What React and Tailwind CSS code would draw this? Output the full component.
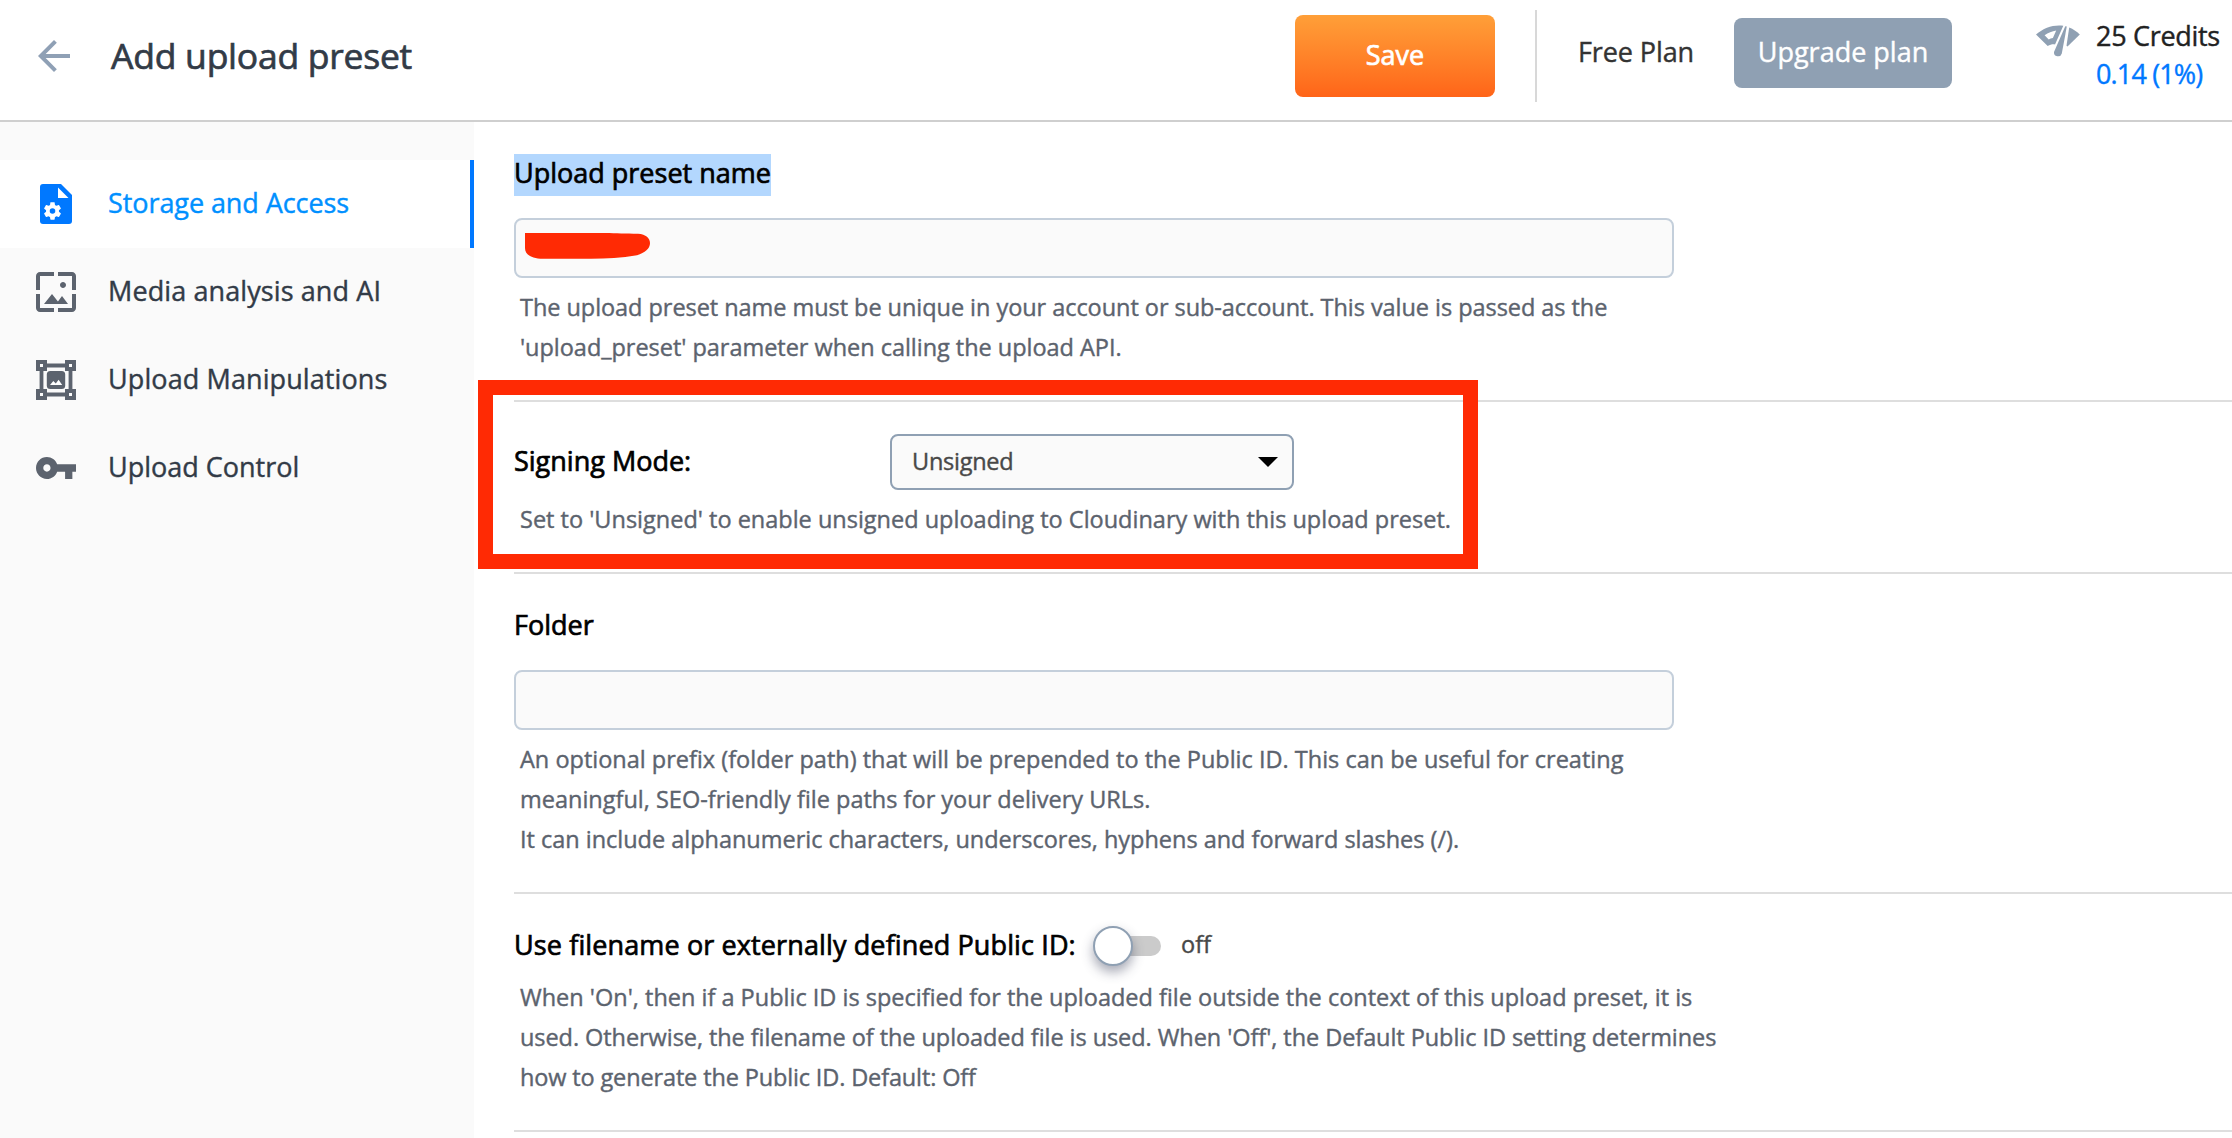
const GEAR =
  "M19.14 12.94c.04-.3.06-.61.06-.94 0-.32-.02-.64-.07-.94l2.03-1.58c.18-.14.23-.41.12-.61l-1.92-3.32c-.12-.22-.37-.29-.59-.22l-2.39.96c-.5-.38-1.03-.7-1.62-.94l-.36-2.54c-.04-.24-.24-.41-.48-.41h-3.84c-.24 0-.43.17-.47.41l-.36 2.54c-.59.24-1.13.57-1.62.94l-2.39-.96c-.22-.08-.47 0-.59.22L2.74 8.87c-.12.21-.08.47.12.61l2.03 1.58c-.05.3-.09.63-.09.94s.02.64.07.94l-2.03 1.58c-.18.14-.23.41-.12.61l1.92 3.32c.12.22.37.29.59.22l2.39-.96c.5.38 1.03.7 1.62.94l.36 2.54c.05.24.24.41.48.41h3.84c.24 0 .44-.17.47-.41l.36-2.54c.59-.24 1.13-.56 1.62-.94l2.39.96c.22.08.47 0 .59-.22l1.92-3.32c.12-.22.07-.47-.12-.61l-2.01-1.58z";

function BackArrow() {
  return (
    <svg viewBox="4 4 16 16" className="size-8 fill-[#8fa0b5]">
      <path d="M20 11H7.83l5.59-5.59L12 4l-8 8 8 8 1.41-1.41L7.83 13H20v-2z" />
    </svg>
  );
}

function FileGearIcon() {
  return (
    <svg viewBox="0 0 32 40" className="h-10 w-8">
      <path fill="#0078ff" d="M3 0h18l11 11v26a3 3 0 0 1-3 3H3a3 3 0 0 1-3-3V3a3 3 0 0 1 3-3z" />
      <path fill="#fff" d="M18 3.5V14h10.5z" />
      <g transform="translate(12.5 27) scale(.9) translate(-12 -12)">
        <path fill="#fff" d={GEAR} />
        <circle cx="12" cy="12" r="3.1" fill="#0078ff" />
      </g>
    </svg>
  );
}

function WallpaperIcon() {
  return (
    <svg viewBox="2 2 20 20" className="size-10 fill-[#5c636e]">
      <path d="M4 4h7V2H4c-1.1 0-2 .9-2 2v7h2V4zm6 9l-4 5h12l-3-4-2.03 2.71L10 13zm7-4.5c0-.83-.67-1.5-1.5-1.5S14 7.67 14 8.5s.67 1.5 1.5 1.5S17 9.33 17 8.5zM20 2h-7v2h7v7h2V4c0-1.1-.9-2-2-2zm0 18h-7v2h7c1.1 0 2-.9 2-2v-7h-2v7zM4 13H2v7c0 1.1.9 2 2 2h7v-2H4v-7z" />
    </svg>
  );
}

function TransformIcon() {
  return (
    <svg viewBox="0 0 40 40" className="size-10 fill-[#5c636e]">
      <path
        fillRule="evenodd"
        d="M0 0h11v3.6h18V0h11v11h-3.6v18H40v11H29v-3.6H11V40H0V29h3.6V11H0zM11 7.4V11H7.4v18H11v3.6h18V29h3.6V11H29V7.4zM4 4v3h3V4zM33 4v3h3V4zM4 33v3h3v-3zM33 33v3h3v-3z"
      />
      <rect x="10.8" y="11" width="18.4" height="18" rx="3.5" />
      <path fill="#fff" d="M14 25l3.3-4 2.5 2.6 2.8-3.8 3.6 5.2z" />
    </svg>
  );
}

function KeyIcon() {
  return (
    <svg viewBox="1 1 22 22" className="size-10 fill-[#5c636e]">
      <path d="M12.65 10C11.83 7.67 9.61 6 7 6c-3.31 0-6 2.69-6 6s2.69 6 6 6c2.61 0 4.83-1.67 5.65-4H17v4h4v-4h2v-4H12.65zM7 14c-1.1 0-2-.9-2-2s.9-2 2-2 2 .9 2 2-.9 2-2 2z" />
    </svg>
  );
}

function GaugeIcon() {
  return (
    <svg viewBox="0 0 44 32" className="h-8 w-11 shrink-0 fill-[#8fa0b3]">
      <path
        fillRule="evenodd"
        d="M0 9.5C8 2.6 17.5-.6 27.3.7L19 19.4c-2.500-.4-4.800.3-7.300 1.600zM8.600 10.300l4.100 4.200c1.200-.8 2.600-1.300 4.200-1.500L20.200 5.600c-4.200.6-8 2.200-11.600 4.700z"
      />
      <path d="M29.300 1.300l1.500.300-5 26.900a4 4 0 0 1-7.800-1.600z" />
      <path d="M33.200 2.500c4 1.700 7.300 3.900 10.600 7L31.500 21.500l-1-.7z" />
    </svg>
  );
}

const NAV = [
  { label: "Storage and Access", Icon: FileGearIcon, active: true, track: "tracking-[-0.08px]" },
  { label: "Media analysis and AI", Icon: WallpaperIcon, track: "tracking-[0.1px]" },
  { label: "Upload Manipulations", Icon: TransformIcon, track: "tracking-[0.1px]" },
  { label: "Upload Control", Icon: KeyIcon, track: "tracking-normal" },
];

function Sidebar() {
  return (
    <nav className="w-[474px] shrink-0 bg-[#fafafa] pt-[38px]">
      {NAV.map(({ label, Icon, active, track }) => (
        <div
          key={label}
          className={
            active
              ? "flex h-[88px] items-center border-r-4 border-[#0078ff] bg-white pl-9 text-[#0090ff]"
              : "flex h-[88px] items-center pl-9 text-[#323b47]"
          }
        >
          <div className="flex w-10 justify-center">
            <Icon />
          </div>
          <span className={`ml-8 pb-[3px] text-[27px] leading-9 ${track}`}>{label}</span>
        </div>
      ))}
    </nav>
  );
}

function Header() {
  return (
    <header className="flex h-[122px] items-center border-b-2 border-[#cfcfcf] bg-white pb-2 pl-[38px] text-[27px]">
      <BackArrow />
      <h1 className="ml-[41px] pb-[3px] text-[35.500px] leading-11 tracking-[-0.25px] text-[#323b47] [-webkit-text-stroke:0.7px]">
        Add upload preset
      </h1>
      <div className="ml-auto flex items-center">
        <button className="flex h-[82px] w-[200px] items-center justify-center rounded-lg bg-linear-to-b from-[#ff9f38] to-[#ff6418] pb-[3px] leading-9 text-white [-webkit-text-stroke:0.7px]">
          Save
        </button>
        <div className="ml-10 h-[92px] w-0.5 bg-[#d8d8d8]" />
        <span className="ml-[41px] w-[156px] pb-2 leading-9 tracking-[-0.1px] text-[#333]">Free Plan</span>
        <button className="mb-1.5 flex h-[70px] w-[218px] items-center justify-center rounded-lg bg-[#8fa0b3] pb-[3px] leading-9 text-white">
          Upgrade plan
        </button>
        <div className="mb-[3px] ml-[84px] flex w-[196px] items-start whitespace-nowrap">
          <div className="mt-2">
            <GaugeIcon />
          </div>
          <div className="ml-4 leading-[38px]">
            <div className="tracking-[-0.3px] text-[#222]">25 Credits</div>
            <div className="tracking-[-0.850px] text-[#0078ff]">0.14 (1%)</div>
          </div>
        </div>
      </div>
    </header>
  );
}

function Section({ children }) {
  return <section className="relative border-b-2 border-[#dedede] pt-8 pb-[33px]">{children}</section>;
}

function Help({ lines }) {
  return (
    <div className="mt-[9px] pl-1.5 text-[23.500px] leading-10 whitespace-nowrap text-[#5c636e]">
      {lines.map(([text, track]) => (
        <p key={text} className={track}>
          {text}
        </p>
      ))}
    </div>
  );
}

export default function App() {
  return (
    <div className="flex h-[1138px] w-[2232px] flex-col overflow-hidden bg-white font-['Open_Sans',sans-serif] [-webkit-text-stroke:0.4px]">
      <Header />
      <div className="flex flex-1 overflow-hidden">
        <Sidebar />
        <main className="flex-1 pl-10">
          <Section>
            <h2 className="h-[42px] w-[257px] bg-[#b3d7fe] text-[27px] leading-[37px] whitespace-nowrap text-black [-webkit-text-stroke:0.7px]">
              Upload preset name
            </h2>
            <div className="mt-[22px] h-[60px] w-[1160px] rounded-lg border-2 border-[#c4cfdb] bg-[#fafafa] pt-[13px] pl-[9px]">
              <svg viewBox="0 0 125 26" className="h-[26px] w-[125px] fill-[#ff2a04]">
                <path d="M0 0h80c12 .2 20 .6 33 .7 8 .5 12 4.500 12 9.600 0 5-5 9.700-13 12C96 25 82 25.800 66 25.800H18C7 25.600 0 22 0 15z" />
              </svg>
            </div>
            <Help
              lines={[
                [
                  "The upload preset name must be unique in your account or sub-account. This value is passed as the",
                  "tracking-[-0.05px]",
                ],
                ["'upload_preset' parameter when calling the upload API.", "tracking-[-0.03px]"],
              ]}
            />
          </Section>

          <Section>
            <div className="flex h-14 items-center">
              <h2 className="w-[376px] pb-[3px] text-[27px] leading-9 text-black [-webkit-text-stroke:0.7px]">
                Signing Mode:
              </h2>
              <div className="flex h-14 w-[404px] items-center justify-between rounded-lg border-2 border-[#8fa0b3] bg-[#fafafa] pr-3.5 pl-5">
                <span className="pb-0.5 text-[23.500px] leading-8 tracking-[-0.250px] text-[#484848]">Unsigned</span>
                <svg viewBox="0 0 20 10" className="h-2.5 w-5 fill-black">
                  <path d="M0 0h20L10 10z" />
                </svg>
              </div>
            </div>
            <Help
              lines={[
                ["Set to 'Unsigned' to enable unsigned uploading to Cloudinary with this upload preset.", "tracking-normal"],
              ]}
            />
            <div className="pointer-events-none absolute -top-[22px] -left-9 h-[189px] w-[1000px] border-[15px] border-[#ff2a04]" />
          </Section>

          <Section>
            <h2 className="h-[42px] text-[27px] leading-[37px] text-black [-webkit-text-stroke:0.7px]">Folder</h2>
            <div className="mt-[22px] h-[60px] w-[1160px] rounded-lg border-2 border-[#c4cfdb] bg-[#fafafa]" />
            <Help
              lines={[
                [
                  "An optional prefix (folder path) that will be prepended to the Public ID. This can be useful for creating",
                  "tracking-normal",
                ],
                ["meaningful, SEO-friendly file paths for your delivery URLs.", "tracking-normal"],
                [
                  "It can include alphanumeric characters, underscores, hyphens and forward slashes (/).",
                  "tracking-[-0.02px]",
                ],
              ]}
            />
          </Section>

          <Section>
            <div className="flex h-[42px] items-start whitespace-nowrap">
              <h2 className="w-[579px] text-[27px] leading-[38px] tracking-[0.120px] text-black [-webkit-text-stroke:0.7px]">
                Use filename or externally defined Public ID:
              </h2>
              <div className="flex h-10 w-[68px] items-center">
                <div className="z-10 size-10 shrink-0 rounded-full border-2 border-[#8fa0b3] bg-white shadow-[0_6px_12px_rgba(60,65,90,0.45)]" />
                <div className="-ml-4 h-5 w-11 rounded-r-full bg-[#cbcbcb]" />
              </div>
              <span className="ml-5 text-[23.500px] leading-[37px] text-[#484848]">off</span>
            </div>
            <Help
              lines={[
                [
                  "When 'On', then if a Public ID is specified for the uploaded file outside the context of this upload preset, it is",
                  "tracking-normal",
                ],
                [
                  "used. Otherwise, the filename of the uploaded file is used. When 'Off', the Default Public ID setting determines",
                  "tracking-[-0.065px]",
                ],
                ["how to generate the Public ID. Default: Off", "tracking-[-0.140px]"],
              ]}
            />
          </Section>
        </main>
      </div>
    </div>
  );
}
